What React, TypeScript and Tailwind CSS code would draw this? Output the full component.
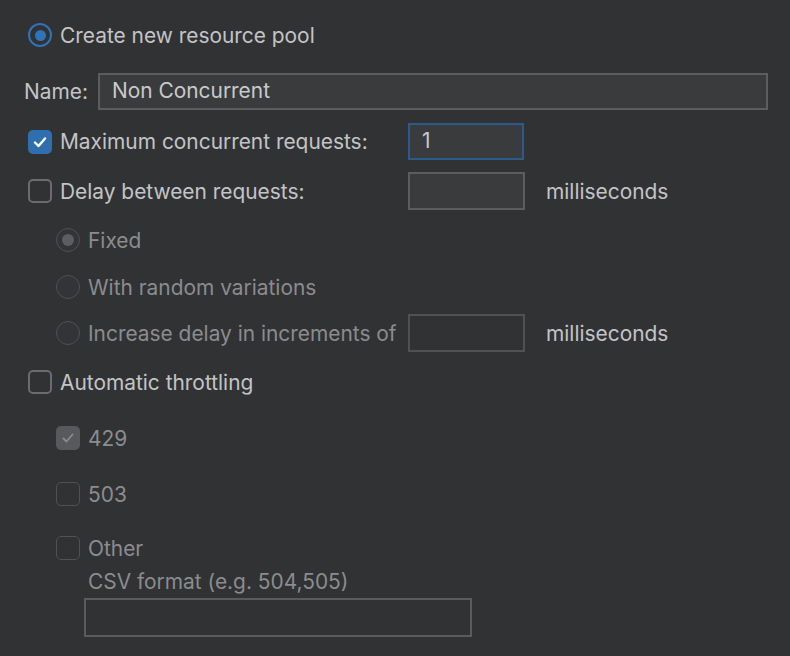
import React from "react";

const Radio = ({ checked, disabled }: { checked?: boolean; disabled?: boolean }) => {
  if (!disabled) {
    return (
      <div className="w-[24px] h-[24px] rounded-full border-[2.5px] border-[#2f74b8] flex items-center justify-center shrink-0">
        {checked && <div className="w-[11px] h-[11px] rounded-full bg-[#2f74b8]" />}
      </div>
    );
  }
  return (
    <div className="w-[24px] h-[24px] rounded-full border-[1.5px] border-[#505153] bg-[#333437] flex items-center justify-center shrink-0">
      {checked && <div className="w-[12px] h-[12px] rounded-full bg-[#5c5d60]" />}
    </div>
  );
};

const Check = ({ checked, disabled }: { checked?: boolean; disabled?: boolean }) => {
  if (checked && !disabled) {
    return (
      <div className="w-[24px] h-[24px] rounded-[5px] bg-[#2f6fb0] flex items-center justify-center shrink-0">
        <svg width="16" height="16" viewBox="0 0 16 16" fill="none">
          <path d="M3 8.5 L6.5 12 L13 4.5" stroke="white" strokeWidth="2.4" strokeLinecap="round" strokeLinejoin="round" />
        </svg>
      </div>
    );
  }
  if (checked && disabled) {
    return (
      <div className="w-[24px] h-[24px] rounded-[5px] bg-[#58595c] flex items-center justify-center shrink-0">
        <svg width="16" height="16" viewBox="0 0 16 16" fill="none">
          <path d="M3.5 8.5 L6.5 11.5 L12.5 4.5" stroke="#8a8b8e" strokeWidth="1.8" strokeLinecap="round" strokeLinejoin="round" />
        </svg>
      </div>
    );
  }
  return (
    <div
      className={
        "w-[24px] h-[24px] rounded-[5px] shrink-0 " +
        (disabled ? "border-[1.5px] border-[#505153]" : "border-[2px] border-[#6b6c6f]")
      }
    />
  );
};

const Field = ({ value, focused, className }: { value?: string; focused?: boolean; className: string }) => (
  <div
    className={
      "bg-[#3a3b3d] flex items-center px-[12px] text-[#c9cacc] " +
      (focused ? "border-[2px] border-[#2c5a8c] " : "border-[2px] border-[#5c5d5f] ") +
      className
    }
  >
    {value}
  </div>
);

export default function App() {
  const en = "text-[#c3c4c6] translate-y-[1px]";
  const dis = "text-[#8b8c8e] translate-y-[1px]";
  return (
    <div
      className="w-[790px] h-[656px] bg-[#313234] overflow-hidden text-[20.9px] leading-none"
      style={{ fontFamily: "Inter, 'Open Sans', 'Liberation Sans', sans-serif" }}
    >
      <div className="flex flex-col pt-[23px]">
        <div className="h-[24px] flex items-center pl-[28px] gap-[8px]">
          <Radio checked />
          <span className={en}>Create new resource pool</span>
        </div>
        <div className="mt-[26px] h-[37px] flex items-center pl-[24px]">
          <span className={en + " w-[74px]"}>Name:</span>
          <Field value="Non Concurrent" className="w-[670px] h-[37px]" />
        </div>
        <div className="mt-[13px] h-[37px] flex items-center pl-[28px]">
          <div className="flex items-center gap-[8px] w-[380px]">
            <Check checked />
            <span className={en}>Maximum concurrent requests:</span>
          </div>
          <Field value="1" focused className="w-[116px] h-[37px]" />
        </div>
        <div className="mt-[12px] h-[38px] flex items-center pl-[28px]">
          <div className="flex items-center gap-[8px] w-[380px]">
            <Check />
            <span className={en}>Delay between requests:</span>
          </div>
          <Field className="w-[117px] h-[38px]" />
          <span className={en + " ml-[21px]"}>milliseconds</span>
        </div>
        <div className="mt-[18px] h-[24px] flex items-center pl-[56px] gap-[8px]">
          <Radio checked disabled />
          <span className={dis}>Fixed</span>
        </div>
        <div className="mt-[23px] h-[24px] flex items-center pl-[56px] gap-[8px]">
          <Radio disabled />
          <span className={dis}>With random variations</span>
        </div>
        <div className="mt-[15px] h-[38px] flex items-center pl-[56px]">
          <div className="flex items-center gap-[8px] w-[352px]">
            <Radio disabled />
            <span className={dis}>Increase delay in increments of</span>
          </div>
          <Field className="w-[117px] h-[38px] !bg-[#313234] !border-[#505153]" />
          <span className={en + " ml-[21px]"}>milliseconds</span>
        </div>
        <div className="mt-[18px] h-[24px] flex items-center pl-[28px] gap-[8px]">
          <Check />
          <span className={en}>Automatic throttling</span>
        </div>
        <div className="mt-[32px] h-[24px] flex items-center pl-[56px] gap-[8px]">
          <Check checked disabled />
          <span className={dis}>429</span>
        </div>
        <div className="mt-[32px] h-[24px] flex items-center pl-[56px] gap-[8px]">
          <Check disabled />
          <span className={dis}>503</span>
        </div>
        <div className="mt-[30px] h-[24px] flex items-center pl-[56px] gap-[8px]">
          <Check disabled />
          <span className={dis}>Other</span>
        </div>
        <div className="mt-[11px] h-[20px] flex items-center pl-[88px]">
          <span className={dis}>CSV format (e.g. 504,505)</span>
        </div>
        <div className="mt-[7px] pl-[84px]">
          <div className="w-[388px] h-[39px] border-[2px] border-[#5a5b5d] bg-[#313234]" />
        </div>
      </div>
    </div>
  );
}
